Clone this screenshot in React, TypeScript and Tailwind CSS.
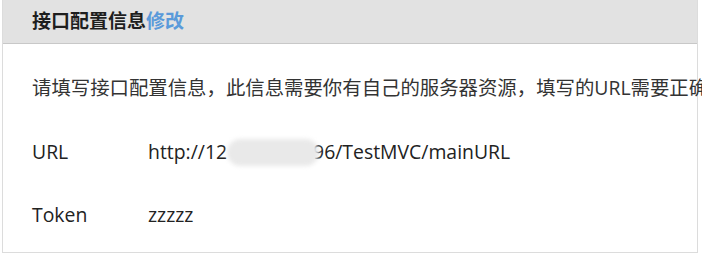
import React from 'react';

const rows = [
  { label: 'URL', value: 'url' },
  { label: 'Token', value: 'zzzzz' },
];

export default function App() {
  return (
    <div
      className="w-[702px] h-[257px] bg-white overflow-hidden"
      style={{ fontFamily: '"Open Sans", "Noto Sans CJK SC", sans-serif' }}
    >
      <div className="ml-[2px] w-[696px] h-[253px] border-l border-r border-b border-[#dcdcdc]">
        {/* Header */}
        <div className="h-[44px] bg-[#e2e2e2] border-b border-[#c8c8c8] pl-[29px] flex items-center">
          <span className="text-[19px] font-bold text-[#1e1e1e] leading-none">接口配置信息</span>
          <span className="text-[19px] font-bold text-[#5a9ada] leading-none">修改</span>
        </div>

        {/* Body */}
        <div className="pl-[29px] pt-[32px] text-[19.4px] text-[#333] leading-[24px] whitespace-nowrap">
          <p>请填写接口配置信息，此信息需要你有自己的服务器资源，填写的URL需要正确</p>

          <div className="mt-[40px] flex flex-col gap-[39px]">
            {rows.map((r) => (
              <div key={r.label} className="flex">
                <span className="w-[116px] text-[#222]">{r.label}</span>
                {r.value === 'url' ? (
                  <span className="text-[#222] flex">
                    http://12
                    <span className="relative w-[86px]">
                      <span className="absolute left-0 -right-[6px] -top-[1px] h-[27px] rounded-full bg-[#e9e9e9] blur-[2px]" />
                    </span>
                    96/TestMVC/mainURL
                  </span>
                ) : (
                  <span className="text-[#222]">{r.value}</span>
                )}
              </div>
            ))}
          </div>
        </div>
      </div>
    </div>
  );
}
